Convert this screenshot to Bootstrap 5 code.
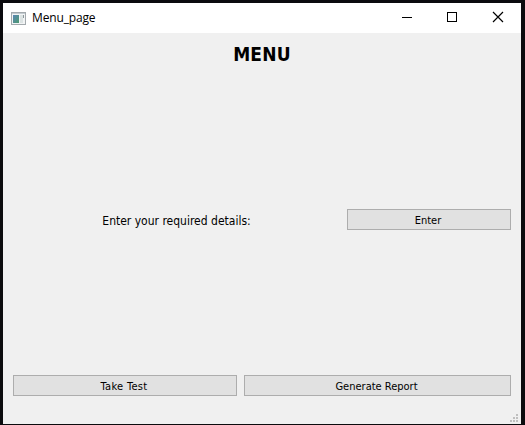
<!DOCTYPE html>
<html lang="en">
<head>
<meta charset="utf-8">
<title>Menu_page</title>
<link href="https://cdn.jsdelivr.net/npm/bootstrap@5.3.0/dist/css/bootstrap.min.css" rel="stylesheet">
<style>
body { height: 425px; background: #0b0b0e; padding: 3px 4px 1px 3px; color: #000; font-family: "DejaVu Sans Condensed", "DejaVu Sans", sans-serif; font-stretch: condensed; }
.win { background: #f0f0f0; }
.titlebar { height: 30px; padding-left: 8px; }
.caption-text { font: 12px/30px "Open Sans", "Noto Sans", sans-serif; margin-left: 6px; letter-spacing: -.15px; }
.ctl { width: 46px; height: 30px; }
.heading { font-size: 19px; line-height: 24px; font-weight: 700; margin: 9px 0 0; letter-spacing: .2px; }
.content { padding: 0 10px 0 10px; }
.prompt { width: 334px; padding: 2px 7px 0 0; font-size: 12px; line-height: 16px; }
.btn-flat { height: 21px; padding: 1px 2px 0 0; font-size: 11px; line-height: 19px; color: #000; background: #e1e1e1; border: 1px solid #adadad; border-radius: 0; }
.details-row { margin-top: 143px; }
.actions { margin-top: 145px; gap: 7px; }
.w-test { width: 224px; letter-spacing: .3px; }
.grip { right: 2px; bottom: 1px; }
</style>
</head>
<body>
<main class="win h-100 d-flex flex-column position-relative">
  <header class="titlebar bg-white d-flex align-items-center">
    <svg width="15" height="13" viewBox="0 0 15 13"><defs><linearGradient id="g" x2="1" y2="1"><stop stop-color="#5b86b4"/><stop offset="1" stop-color="#4c9a70"/></linearGradient></defs><rect x=".5" y=".5" width="14" height="12" fill="#f2f4f5" stroke="#a3a9ad"/><path d="M1 1.5h13" stroke="#c3cbd0"/><rect x="2" y="3" width="6" height="8" fill="url(#g)"/><rect x="9" y="3" width="3" height="8" fill="#dce3e3"/><path d="M12.500 3v3" stroke="#8d989c"/></svg>
    <span class="caption-text">Menu_page</span>
    <div class="d-flex ms-auto">
      <div class="ctl"><svg width="46" height="30"><path d="M19 14.500h10" stroke="#000"/></svg></div>
      <div class="ctl"><svg width="46" height="30"><rect x="18.500" y="9.500" width="9" height="9" fill="none" stroke="#000"/></svg></div>
      <div class="ctl"><svg width="46" height="30"><path d="M18 9l10 10M28 9l-10 10" stroke="#000" stroke-width="1.200"/></svg></div>
    </div>
  </header>
  <h1 class="heading text-center">MENU</h1>
  <div class="content">
    <div class="details-row d-flex align-items-center">
      <div class="prompt text-center">Enter your required details:</div>
      <button type="button" class="btn btn-flat flex-fill">Enter</button>
    </div>
    <div class="actions d-flex">
      <button type="button" class="btn btn-flat w-test">Take Test</button>
      <button type="button" class="btn btn-flat flex-fill">Generate Report</button>
    </div>
  </div>
  <svg class="grip position-absolute" width="9" height="9" fill="#bfbfbf"><path d="M6 0h2v2h-2zM3 3h2v2h-2zM6 3h2v2h-2zM0 6h2v2h-2zM3 6h2v2h-2zM6 6h2v2h-2z"/></svg>
</main>
<script src="https://cdn.jsdelivr.net/npm/bootstrap@5.3.0/dist/js/bootstrap.bundle.min.js"></script>
</body>
</html>
